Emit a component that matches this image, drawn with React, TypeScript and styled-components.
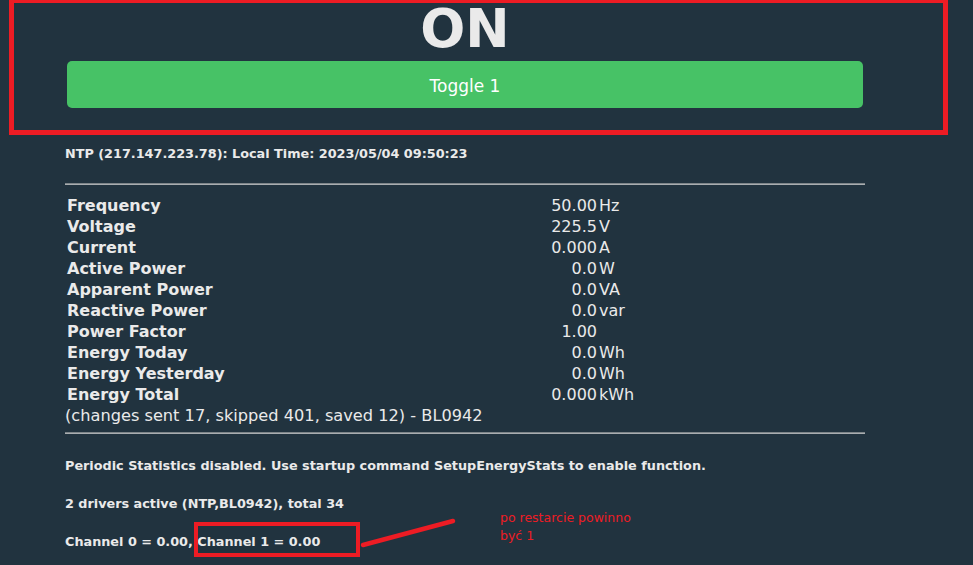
import React from "react";
import styled, { createGlobalStyle } from "styled-components";

const Global = createGlobalStyle`
  html, body { margin: 0; padding: 0; background: #21333f; }
  body { font-family: "DejaVu Sans", Verdana, sans-serif; color: #eaeaea; width: 973px; height: 565px; overflow: hidden; }
`;

const Page = styled.div`
  position: relative;
  width: 973px;
  height: 565px;
  box-sizing: border-box;
  padding: 0 0 0 65px;
`;

const Content = styled.div`
  width: 800px;
  display: flex;
  flex-direction: column;
`;

const State = styled.div`
  text-align: center;
  font-weight: bold;
  font-size: 53px;
  line-height: 58px;
  height: 56px;
  color: #eaeaea;
`;

const ToggleButton = styled.button`
  margin: 5px 2px 0 2px;
  height: 47px;
  border: none;
  border-radius: 5px;
  background: #47c266;
  color: #ffffff;
  font-family: "DejaVu Sans", Verdana, sans-serif;
  font-size: 17px;
  padding: 3px 0 0 0;
  cursor: pointer;
`;

const SmallBold = styled.div<{ $top: number }>`
  margin-top: ${(p) => p.$top}px;
  font-size: 12.8px;
  font-weight: bold;
  line-height: 16px;
  white-space: nowrap;
`;

const Rule = styled.div<{ $top: number }>`
  margin-top: ${(p) => p.$top}px;
  height: 2px;
  border-top: 1px solid #7d8589;
  border-bottom: 1px solid #a9adb0;
  box-sizing: border-box;
`;

const Table = styled.div`
  margin-top: 10px;
  display: grid;
  grid-template-columns: 483px 49px auto;
  font-size: 16px;
`;

const Label = styled.div`
  padding-left: 2px;
  font-weight: bold;
  line-height: 21px;
  white-space: nowrap;
`;

const Value = styled.div`
  text-align: right;
  line-height: 21px;
  white-space: nowrap;
`;

const Unit = styled.div`
  padding-left: 2px;
  line-height: 21px;
  white-space: nowrap;
`;

const Note = styled.div`
  font-size: 16.2px;
  line-height: 21px;
  white-space: nowrap;
`;

const AnnotBox = styled.div<{ $x: number; $y: number; $w: number; $h: number; $b: number }>`
  position: absolute;
  left: ${(p) => p.$x}px;
  top: ${(p) => p.$y}px;
  width: ${(p) => p.$w}px;
  height: ${(p) => p.$h}px;
  border: ${(p) => p.$b}px solid #ed1c24;
  box-sizing: border-box;
  pointer-events: none;
`;

const AnnotLine = styled.svg`
  position: absolute;
  left: 355px;
  top: 512px;
  width: 110px;
  height: 45px;
  pointer-events: none;
`;

const AnnotText = styled.div`
  position: absolute;
  left: 500px;
  top: 509px;
  color: #ed1c24;
  font-family: "DejaVu Sans", Tahoma, sans-serif;
  font-size: 12.5px;
  line-height: 18px;
  white-space: nowrap;
`;

const rows: [string, string, string][] = [
  ["Frequency", "50.00", "Hz"],
  ["Voltage", "225.5", "V"],
  ["Current", "0.000", "A"],
  ["Active Power", "0.0", "W"],
  ["Apparent Power", "0.0", "VA"],
  ["Reactive Power", "0.0", "var"],
  ["Power Factor", "1.00", ""],
  ["Energy Today", "0.0", "Wh"],
  ["Energy Yesterday", "0.0", "Wh"],
  ["Energy Total", "0.000", "kWh"],
];

export default function App() {
  return (
    <>
      <Global />
      <Page>
        <Content>
          <State>ON</State>
          <ToggleButton>Toggle 1</ToggleButton>
          <SmallBold $top={38}>NTP (217.147.223.78): Local Time: 2023/05/04 09:50:23</SmallBold>
          <Rule $top={21} />
          <Table>
            {rows.map(([l, v, u]) => (
              <React.Fragment key={l}>
                <Label>{l}</Label>
                <Value>{v}</Value>
                <Unit>{u}</Unit>
              </React.Fragment>
            ))}
          </Table>
          <Note>(changes sent 17, skipped 401, saved 12) - BL0942</Note>
          <Rule $top={6} />
          <SmallBold $top={24}>Periodic Statistics disabled. Use startup command SetupEnergyStats to enable function.</SmallBold>
          <SmallBold $top={22}>2 drivers active (NTP,BL0942), total 34</SmallBold>
          <SmallBold $top={22}>Channel 0 = 0.00, Channel 1 = 0.00</SmallBold>
        </Content>
        <AnnotBox $x={9} $y={-2} $w={939} $h={137} $b={5} />
        <AnnotBox $x={194} $y={522} $w={166} $h={35} $b={4} />
        <AnnotLine viewBox="0 0 110 45">
          <line x1="8" y1="33" x2="98" y2="9" stroke="#ed1c24" strokeWidth="4.5" strokeLinecap="round" />
        </AnnotLine>
        <AnnotText>
          po restarcie powinno
          <br />
          być 1
        </AnnotText>
      </Page>
    </>
  );
}
